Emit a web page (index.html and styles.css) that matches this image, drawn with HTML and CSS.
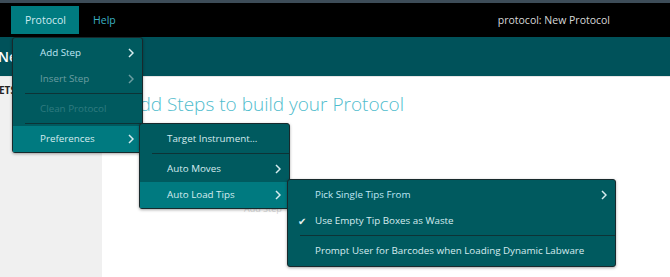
FILE: index.html
```html
<!DOCTYPE html>
<html lang="en">
<head>
  <meta charset="UTF-8" />
  <title>protocol: New Protocol</title>
  <link rel="stylesheet" href="styles.css">
</head>
<body>

  <div class="app">
    <div class="top-strip"></div>

    <!-- Barre de menus -->
    <div class="menubar">
      <div class="menubar-item open">Protocol</div>
      <div class="menubar-item">Help</div>
      <div class="doc-name">protocol: New Protocol</div>
    </div>

    <div class="titlebar"><span class="title">New Protocol</span></div>

    <div class="main">
      <div class="sidebar"><span class="sidebar-label">PRESETS</span></div>
      <div class="content">
        <h1>Add Steps to build your Protocol</h1>
        <div class="add-step">Add Step</div>
      </div>
    </div>

    <!-- Menu Protocol -->
    <div class="menu menu-protocol">
      <div class="menu-item hot">Add Step<svg class="chev" viewBox="0 0 6 10"><polyline points="1,1 5,5 1,9" /></svg></div>
      <div class="menu-item disabled">Insert Step<svg class="chev" viewBox="0 0 6 10"><polyline points="1,1 5,5 1,9" /></svg></div>
      <div class="sep"></div>
      <div class="menu-item off">Clean Protocol</div>
      <div class="sep"></div>
      <div class="menu-item active">Preferences<svg class="chev" viewBox="0 0 6 10"><polyline points="1,1 5,5 1,9" /></svg></div>
    </div>

    <!-- Sous-menu Preferences -->
    <div class="menu menu-prefs">
      <div class="menu-item">Target Instrument...</div>
      <div class="sep"></div>
      <div class="menu-item">Auto Moves<svg class="chev" viewBox="0 0 6 10"><polyline points="1,1 5,5 1,9" /></svg></div>
      <div class="menu-item active">Auto Load Tips<svg class="chev" viewBox="0 0 6 10"><polyline points="1,1 5,5 1,9" /></svg></div>
    </div>

    <!-- Sous-menu Auto Load Tips -->
    <div class="menu menu-tips">
      <div class="menu-item hot">Pick Single Tips From<svg class="chev" viewBox="0 0 6 10"><polyline points="1,1 5,5 1,9" /></svg></div>
      <div class="menu-item"><span class="check">&#x2714;</span>Use Empty Tip Boxes as Waste</div>
      <div class="sep"></div>
      <div class="menu-item">Prompt User for Barcodes when Loading Dynamic Labware</div>
    </div>
  </div>

</body>
</html>
```

FILE: styles.css
```css
html, body {
  margin: 0;
  padding: 0;
  width: 670px;
  height: 277px;
  overflow: hidden;
  background: #fff;
  font-family: "Open Sans", "Noto Sans", sans-serif;
}
.app {
  position: relative;
  width: 670px;
  height: 277px;
  display: flex;
  flex-direction: column;
}
.top-strip {
  height: 3px;
  background: #3d4c58;
}
.menubar {
  height: 34px;
  background: #000;
  display: flex;
  align-items: center;
  padding-left: 11px;
  font-size: 10.5px;
}
.menubar-item {
  height: 28px;
  line-height: 28px;
  padding: 0 14px;
  color: #3cb1c3;
}
.menubar-item.open {
  background: #007b80;
  color: #cfeaf0;
  width: 40px;
}
.doc-name {
  margin-left: auto;
  margin-right: 60px;
  color: #d8d8d8;
}
.titlebar {
  height: 39px;
  background: #00525a;
  display: flex;
  align-items: center;
  border-bottom: 1px solid #e6e6e6;
}
.title {
  margin-left: -2px;
  color: #fff;
  font-size: 14px;
  font-weight: 600;
}
.main {
  flex: 1;
  display: flex;
}
.sidebar {
  width: 102px;
  background: #f0f0f0;
  padding-top: 6px;
}
.sidebar-label {
  display: block;
  margin-left: -25px;
  font-size: 10px;
  font-weight: 700;
  color: #222;
}
.content {
  flex: 1;
  padding-left: 26px;
}
.content h1 {
  margin: 14px 0 0;
  font-size: 19px;
  font-weight: 300;
  color: #4fbccd;
}
.add-step {
  margin: 85px 0 0 116px;
  font-size: 9px;
  color: #d6d6d6;
}

/* Menus déroulants */
.menu {
  position: absolute;
  background: #005a5f;
  border: 1px solid #18292c;
  border-radius: 3px;
  padding: 2px 0;
  box-shadow: 0 1px 3px rgba(0, 0, 0, 0.35);
  font-size: 9.8px;
}
.menu-item {
  position: relative;
  height: 26px;
  line-height: 26px;
  padding-left: 27px;
  padding-right: 30px;
  color: #d6ecef;
  white-space: nowrap;
}
.menu-item.hot {
  color: #bfe6f4;
}
.menu-item.disabled {
  color: #6b9da1;
}
.menu-item.off {
  color: #2f7b7f;
}
.menu-item.active {
  background: #007a80;
}
.chev {
  position: absolute;
  right: 8px;
  top: 8px;
  width: 6px;
  height: 10px;
  fill: none;
  stroke: #d6ecef;
  stroke-width: 1.5;
}
.disabled .chev {
  stroke: #6b9da1;
}
.check {
  position: absolute;
  left: 10px;
  font-size: 10px;
  color: #e6f2f3;
}
.sep {
  height: 2px;
  margin-left: 12px;
  margin-top: 1px;
  border-top: 1px solid #0d3336;
}
.menu-protocol {
  left: 12px;
  top: 37px;
  width: 129px;
  padding-bottom: 0;
}
.menu-prefs {
  left: 139px;
  top: 123px;
  width: 149px;
  padding-bottom: 0;
}
.menu-tips {
  left: 287px;
  top: 179px;
  width: 327px;
}
```
